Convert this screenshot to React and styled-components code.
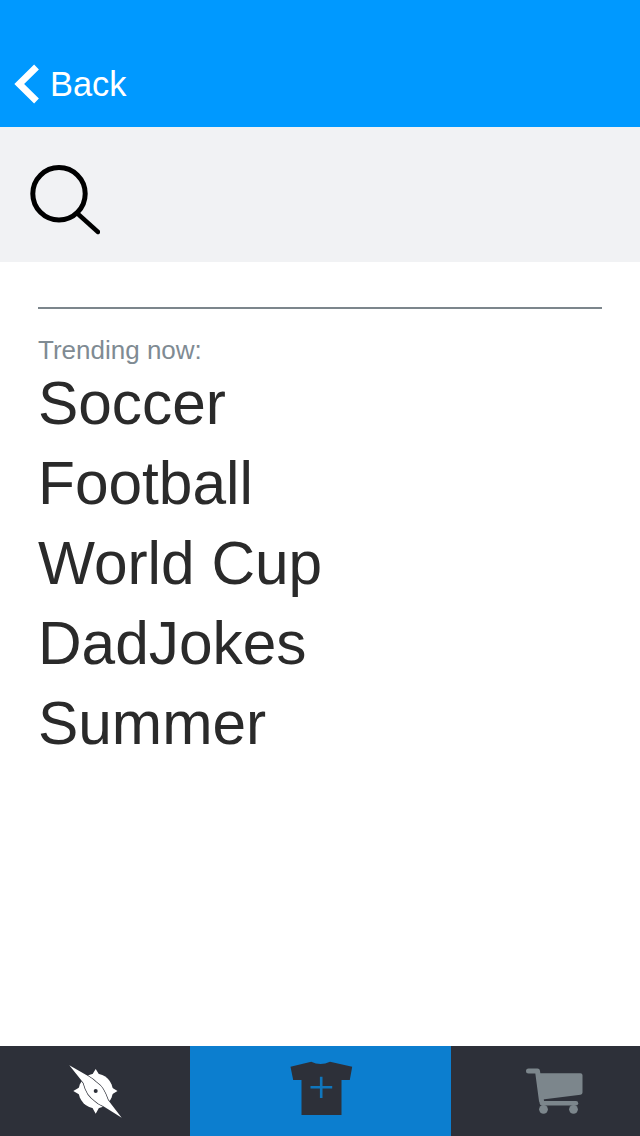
import React from "react";
import styled, { createGlobalStyle } from "styled-components";

const Global = createGlobalStyle`
  html, body { margin: 0; padding: 0; background: #fff; }
  body { font-family: "Liberation Sans", Arial, sans-serif; }
`;
const Page = styled.div`
  width: 640px; height: 1136px; display: flex; flex-direction: column; overflow: hidden; background: #fff;
`;
const Header = styled.header`
  height: 127px; flex: none; background: #0099ff; box-sizing: border-box;
  display: flex; align-items: flex-end; padding: 0 0 21px 14px;
`;
const BackButton = styled.div`
  display: flex; align-items: center; gap: 10px; height: 44px;
`;
const BackLabel = styled.span`
  color: #fff; font-size: 34.4px; line-height: 44px;
`;
const SearchBar = styled.div`
  height: 135px; flex: none; background: #f1f2f4; box-sizing: border-box;
  display: flex; align-items: center; padding: 11px 0 0 30px;
`;
const Main = styled.main`
  flex: 1; padding: 45px 38px 0;
`;
const Rule = styled.hr`
  margin: 0; border: 0; height: 2px; background: #7c868c;
`;
const TrendingLabel = styled.div`
  margin-top: 26px; color: #7f8b93; font-size: 26px; line-height: 30px;
`;
const TrendList = styled.ul`
  list-style: none; margin: -2px 0 0; padding: 0;
`;
const TrendItem = styled.li`
  color: #2a2a2a; font-size: 60.4px; line-height: 80px; height: 80px;
`;
const TabBar = styled.nav`
  height: 90px; flex: none; background: #2d3039; display: flex;
`;
const Tab = styled.div`
  width: ${p => p.$w}px; flex: none; background: ${p => (p.$active ? "#0c7ecf" : "transparent")};
  display: flex; align-items: center; justify-content: center;
`;

const Chevron = () => (
  <svg width="26" height="40" viewBox="0 0 26 40">
    <path d="M22.5 3 L5.2 20 L22.5 37" fill="none" stroke="#fff" strokeWidth="6.8" />
  </svg>
);
const SearchIcon = () => (
  <svg width="70" height="70" viewBox="0 0 70 70">
    <circle cx="29" cy="28.8" r="26.2" fill="none" stroke="#000" strokeWidth="5" />
    <path d="M48 49 L68 67" fill="none" stroke="#000" strokeWidth="4.4" strokeLinecap="round" />
  </svg>
);
const lens = "M29.3 19.3 L48 30 Q53 33 56 36 Q61 39.5 63 43 Q66 48 68 54 L81.7 71.7 L63 60 Q58 58 55 55 Q51 52 48 48 Q45 43 43.5 37 Z";
const Compass = () => (
  <svg width="120" height="90" viewBox="-5 0 120 90">
    <circle cx="55.7" cy="45" r="17.2" fill="#fff" />
    <path d="M55.7 23 L60 30 H51.4 Z M77.5 45 L70.5 49.3 V40.7 Z M55.7 67.7 L51.4 60 H60 Z M33.3 45 L40.5 40.7 V49.3 Z" fill="#fff" />
    <path d={lens} fill="#fff" stroke="#2d3039" strokeWidth="1.4" />
    <path d={lens} fill="#fff" />
    <circle cx="55.7" cy="45" r="2" fill="#2d3039" />
  </svg>
);
const Tee = () => (
  <svg width="100" height="90" viewBox="0.5 0 100 90">
    <path d="M20 20.7 L40.7 15.7 Q50 20.5 59.5 15.7 L81.7 20.7 L79.3 34 L71 34 L71 69 L31 69 L31 34 L22.7 34 Z" fill="#2d3039" />
    <path d="M40 41.3 H61.7 M50.7 30.7 V52" fill="none" stroke="#0f76bd" strokeWidth="2.6" />
  </svg>
);
const Cart = () => (
  <svg width="110" height="90" viewBox="-9.5 0 110 90">
    <path d="M28 25 H37 L41 55" fill="none" stroke="#7c868c" strokeWidth="5" strokeLinecap="round" strokeLinejoin="round" />
    <path d="M37 27.3 H80 Q82 27.3 82 29.3 V46.5 Q82 48.5 80 48.7 L44 53.3 L41 53.5 Z" fill="#7c868c" />
    <path d="M41.5 57.3 H75.5" stroke="#7c868c" strokeWidth="4.4" strokeLinecap="round" />
    <circle cx="43" cy="63.3" r="4.4" fill="#7c868c" />
    <circle cx="73" cy="63.3" r="4.4" fill="#7c868c" />
  </svg>
);

const trends = ["Soccer", "Football", "World Cup", "DadJokes", "Summer"];

export default function App() {
  return (
    <Page>
      <Global />
      <Header>
        <BackButton>
          <Chevron />
          <BackLabel>Back</BackLabel>
        </BackButton>
      </Header>
      <SearchBar>
        <SearchIcon />
      </SearchBar>
      <Main>
        <Rule />
        <TrendingLabel>Trending now:</TrendingLabel>
        <TrendList>
          {trends.map(t => <TrendItem key={t}>{t}</TrendItem>)}
        </TrendList>
      </Main>
      <TabBar>
        <Tab $w={190}><Compass /></Tab>
        <Tab $w={261} $active><Tee /></Tab>
        <Tab $w={189}><Cart /></Tab>
      </TabBar>
    </Page>
  );
}
